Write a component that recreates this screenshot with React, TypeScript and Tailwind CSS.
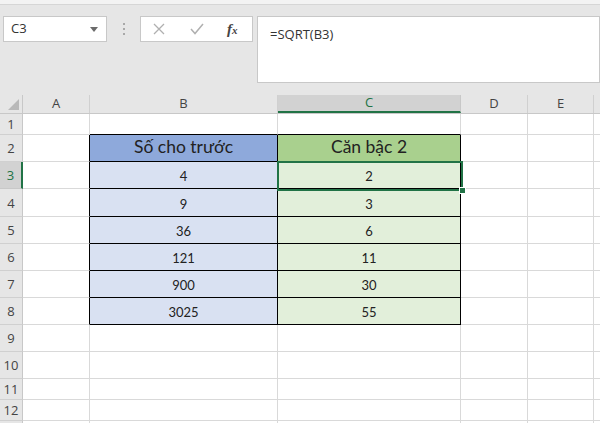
import React from "react";

const cols = [
  { key: "A", w: 67 },
  { key: "B", w: 188 },
  { key: "C", w: 183 },
  { key: "D", w: 67 },
  { key: "E", w: 66 },
  { key: "F", w: 40 },
];

type Row = { n: number; h: number; b?: string; c?: string; head?: boolean };

const rows: Row[] = [
  { n: 1, h: 21 },
  { n: 2, h: 27, b: "Số cho trước", c: "Căn bậc 2", head: true },
  { n: 3, h: 27, b: "4", c: "2" },
  { n: 4, h: 28, b: "9", c: "3" },
  { n: 5, h: 27, b: "36", c: "6" },
  { n: 6, h: 27, b: "121", c: "11" },
  { n: 7, h: 27, b: "900", c: "30" },
  { n: 8, h: 27, b: "3025", c: "55" },
  { n: 9, h: 27 },
  { n: 10, h: 27 },
  { n: 11, h: 21 },
  { n: 12, h: 21 },
  { n: 0, h: 21 }, // row 13, only its top pixels show
];

const uiFont = { fontFamily: '"Open Sans", "Noto Sans", sans-serif' };
const cellFont = { fontFamily: 'Lato, "Liberation Sans", sans-serif' };

function Toolbar() {
  return (
    <div className="h-[95px] bg-[#e6e6e6] flex flex-col" style={uiFont}>
      <div className="h-[5px] bg-[#f3f3f3] border-b border-[#d6d6d6]" />
      <div className="flex items-start pt-[11px] pl-[3px]">
        <div className="w-[104px] h-[26px] bg-white border border-[#c8c8c8] flex items-center justify-between pl-[7px] pr-[8px]">
          <span className="text-[13px] text-[#333]">C3</span>
          <svg width="8" height="5" viewBox="0 0 8 5">
            <path d="M0 0h8L4 5z" fill="#6b6b6b" />
          </svg>
        </div>
        <div className="w-[33px] h-[26px] flex flex-col items-center justify-center gap-[3px]">
          <span className="w-[2px] h-[2px] bg-[#a8a8a8]" />
          <span className="w-[2px] h-[2px] bg-[#a8a8a8]" />
          <span className="w-[2px] h-[2px] bg-[#a8a8a8]" />
        </div>
        <div className="w-[113px] h-[26px] bg-white border border-[#c8c8c8] flex items-center pl-[12px]">
          <svg width="12" height="12" viewBox="0 0 12 12">
            <path d="M1 1l10 10M11 1L1 11" stroke="#b0b0b0" strokeWidth="1.3" />
          </svg>
          <svg className="ml-[25px]" width="14" height="12" viewBox="0 0 14 12">
            <path d="M1 6l4 4.5L13 1" stroke="#b0b0b0" strokeWidth="1.5" fill="none" />
          </svg>
          <span
            className="ml-[23px] text-[15px] italic font-bold text-[#444] leading-none"
            style={{ fontFamily: '"Liberation Serif", serif' }}
          >
            f<span className="text-[11px]">x</span>
          </span>
        </div>
        <div className="ml-[4px] flex-1 h-[67px] bg-white border border-[#c8c8c8] pl-[12px] pt-[4px]">
          <span className="text-[13px] text-[#333]">=SQRT(B3)</span>
        </div>
      </div>
    </div>
  );
}

function Sheet() {
  return (
    <div className="relative bg-white">
      <div className="flex h-[19px] bg-[#e6e6e6] border-b border-[#c8c8c8]" style={uiFont}>
        <div className="w-[23px] shrink-0 border-r border-[#c8c8c8] flex items-end justify-end pr-[3px] pb-[3px]">
          <svg width="11" height="11" viewBox="0 0 11 11">
            <path d="M11 0v11H0z" fill="#b9b9b9" />
          </svg>
        </div>
        {cols.map((c) => (
          <div
            key={c.key}
            style={{ width: c.w }}
            className={
              c.key === "C"
                ? "shrink-0 border-r border-[#c8c8c8] bg-[#d2d2d2] flex items-center justify-center text-[13px] text-[#217346] border-b-2 border-b-[#217346]"
                : "shrink-0 border-r border-[#d0d0d0] flex items-center justify-center text-[13px] text-[#444]"
            }
          >
            {c.key === "F" ? "" : c.key}
          </div>
        ))}
      </div>
      {rows.map((r, i) => (
        <div key={i} className="flex" style={{ height: r.h }}>
          <div
            style={uiFont}
            className={
              r.n === 3
                ? "w-[23px] shrink-0 bg-[#d2d2d2] border-r-2 border-r-[#217346] border-b border-[#c8c8c8] flex items-center justify-center pt-[2px] text-[13px] text-[#217346]"
                : "w-[23px] shrink-0 bg-[#e6e6e6] border-r border-r-[#c8c8c8] border-b border-[#d0d0d0] flex items-center justify-center pt-[2px] text-[13px] text-[#444]"
            }
          >
            {r.n ? r.n : ""}
          </div>
          {cols.map((c) => {
            const inTable = r.b !== undefined;
            let cls = "shrink-0 box-border border-r border-b flex items-end justify-center text-[#222]";
            let text = "";
            if (c.key === "B" && inTable) {
              cls += r.head
                ? " bg-[#8ea9db] border-black text-[17.5px] pb-[1px]"
                : " bg-[#d9e1f2] border-black text-[13px] pb-[2px]";
              text = r.b!;
            } else if (c.key === "C" && inTable) {
              cls += r.head
                ? " bg-[#a9d08e] border-black text-[17.5px] pb-[1px]"
                : " bg-[#e2efda] border-black text-[13px] pb-[2px]";
              text = r.c!;
            } else if (c.key === "A" && inTable) {
              cls += " border-r-black border-b-[#d9d9d9]";
            } else if ((c.key === "B" || c.key === "C") && r.n === 1) {
              cls += " border-b-black border-r-[#d9d9d9]";
            } else {
              cls += " border-[#d9d9d9]";
            }
            return (
              <div key={c.key} style={{ width: c.w, ...cellFont }} className={cls}>
                {text}
              </div>
            );
          })}
        </div>
      ))}
      <div className="absolute left-[277px] top-[66px] w-[186px] h-[30px] border-2 border-[#217346] pointer-events-none" />
      <div className="absolute left-[459px] top-[92px] w-[7px] h-[7px] bg-[#217346] border border-white" />
    </div>
  );
}

export default function App() {
  return (
    <div className="w-[600px] h-[423px] overflow-hidden bg-white">
      <Toolbar />
      <Sheet />
    </div>
  );
}
